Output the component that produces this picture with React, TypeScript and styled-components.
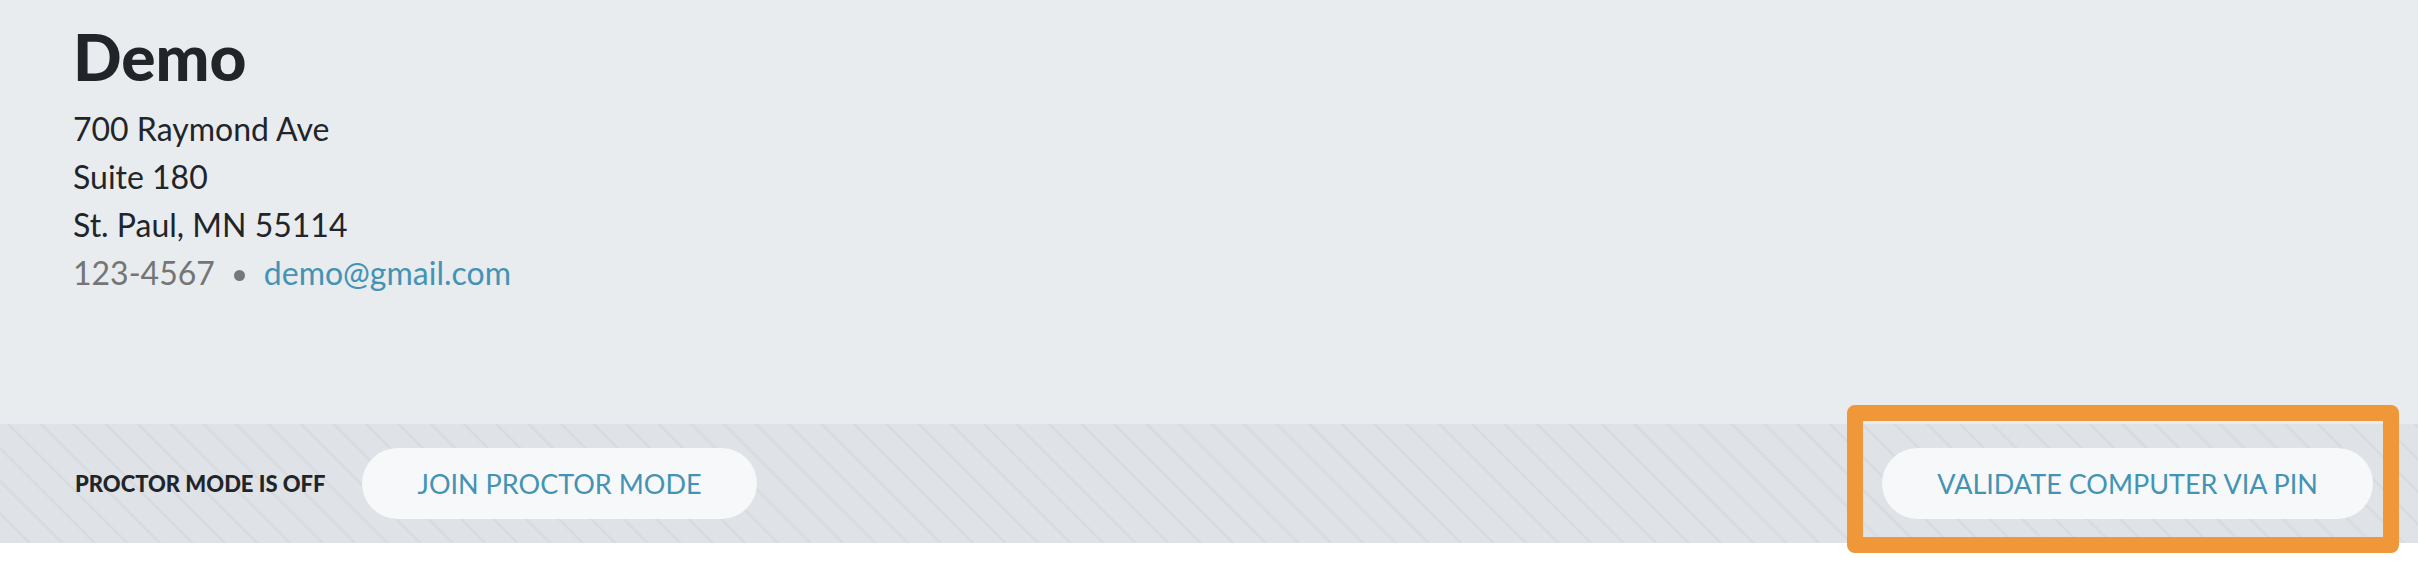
import styled, { createGlobalStyle } from "styled-components";

const GlobalStyle = createGlobalStyle`
  html, body {
    margin: 0;
    padding: 0;
    background: #ffffff;
  }
  body {
    font-family: Lato, "Open Sans", sans-serif;
    color: #212529;
  }
`;

export default function App() {
  return (
    <>
      <GlobalStyle />
      <Page>
        <Header>
          <Title>Demo</Title>
          <Line>700 Raymond Ave</Line>
          <Line>Suite 180</Line>
          <Line>St. Paul, MN 55114</Line>
          <Contact>
            <Phone>123-4567</Phone>
            <Dot />
            <Email href="#">demo@gmail.com</Email>
          </Contact>
        </Header>
        <Band>
          <LeftGroup>
            <Status>PROCTOR MODE IS OFF</Status>
            <PillButton>JOIN PROCTOR MODE</PillButton>
          </LeftGroup>
          <Highlighted>
            <PillButton>VALIDATE COMPUTER VIA PIN</PillButton>
            <Highlight />
          </Highlighted>
        </Band>
      </Page>
    </>
  );
}

const Page = styled.div`
  width: 100%;
  min-height: 582px;
  background: #ffffff;
`;

const Header = styled.div`
  background-color: #e8ecef;
  padding: 17px 73px 0;
  height: 424px;
  box-sizing: border-box;
`;

const Title = styled.h1`
  margin: 0 0 8px;
  font-size: 64px;
  font-weight: 900;
  line-height: 1.25;
  color: #212529;
`;

const Line = styled.div`
  font-size: 32px;
  line-height: 48px;
  color: #212529;
`;

const Contact = styled.div`
  display: flex;
  align-items: center;
  font-size: 32px;
  line-height: 48px;
`;

const Phone = styled.span`
  color: #757575;
`;

const Dot = styled.span`
  width: 11px;
  height: 11px;
  border-radius: 50%;
  background: #777777;
  margin: 4px 19px 0 19px;
`;

const Email = styled.a`
  color: #4493b4;
  text-decoration: none;
`;

const Band = styled.div`
  height: 119px;
  display: flex;
  align-items: center;
  justify-content: space-between;
  padding: 0 45px 0 75px;
  background-color: #dfe2e6;
  background-image: repeating-linear-gradient(
    45deg,
    rgba(0, 0, 0, 0) 0px,
    rgba(0, 0, 0, 0) 19px,
    rgba(170, 176, 184, 0.14) 20.5px,
    rgba(170, 176, 184, 0.14) 21.5px,
    rgba(0, 0, 0, 0) 23px
  );
`;

const LeftGroup = styled.div`
  display: flex;
  align-items: center;
  gap: 37px;
`;

const Status = styled.div`
  font-size: 22px;
  font-weight: 900;
  color: #212529;
`;

const PillButton = styled.button`
  height: 71px;
  padding: 0 55px;
  border: none;
  border-radius: 36px;
  background: #f6f8fa;
  color: #4493b4;
  font-family: Lato, "Open Sans", sans-serif;
  font-size: 27px;
  font-weight: 400;
  text-transform: uppercase;
  cursor: pointer;
`;

const Highlighted = styled.div`
  position: relative;
  display: flex;
`;

const Highlight = styled.div`
  position: absolute;
  top: -43px;
  bottom: -34px;
  left: -35px;
  right: -26px;
  border: 16px solid #f0973a;
  border-radius: 8px;
  pointer-events: none;
`;
